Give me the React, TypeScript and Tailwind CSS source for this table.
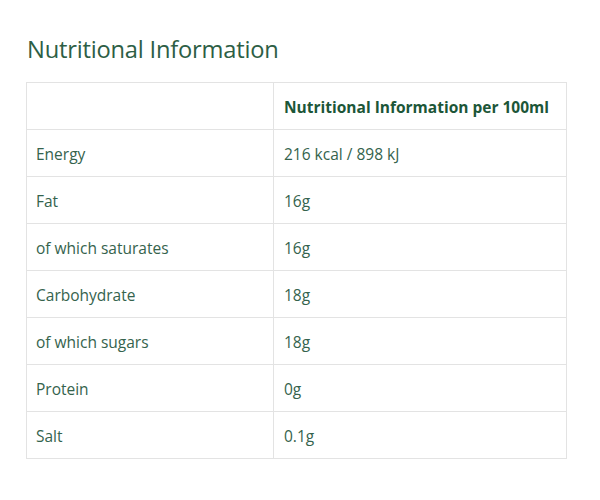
export default function App() {
  const rows = [
    ["Energy", "216 kcal / 898 kJ"],
    ["Fat", "16g"],
    ["of which saturates", "16g"],
    ["Carbohydrate", "18g"],
    ["of which sugars", "18g"],
    ["Protein", "0g"],
    ["Salt", "0.1g"],
  ];

  return (
    <main
      className="min-h-screen bg-white px-[26px] pt-[33px]"
      style={{ fontFamily: '"Open Sans", "Noto Sans", sans-serif' }}
    >
      <h2 className="text-[23.7px] leading-[32px] text-[#2d5e45] mb-[17px] ml-[1px] tracking-[-0.2px]">
        Nutritional Information
      </h2>

      <table className="w-[541px] border-collapse text-[15.5px] text-[#35634d]">
        <thead>
          <tr className="h-[47px]">
            <th className="w-[247px] border border-[#e3e3e3]"></th>
            <th className="border border-[#e3e3e3] px-[10px] pt-[3px] pb-0 text-left font-bold text-[#1c5638]">
              Nutritional Information per 100ml
            </th>
          </tr>
        </thead>
        <tbody>
          {rows.map(([label, value]) => (
            <tr key={label} className="h-[47px]">
              <td className="border border-[#e3e3e3] pl-[9px] pr-[10px] pt-[3px]">{label}</td>
              <td className="border border-[#e3e3e3] px-[10px] pt-[3px]">{value}</td>
            </tr>
          ))}
        </tbody>
      </table>
    </main>
  );
}
